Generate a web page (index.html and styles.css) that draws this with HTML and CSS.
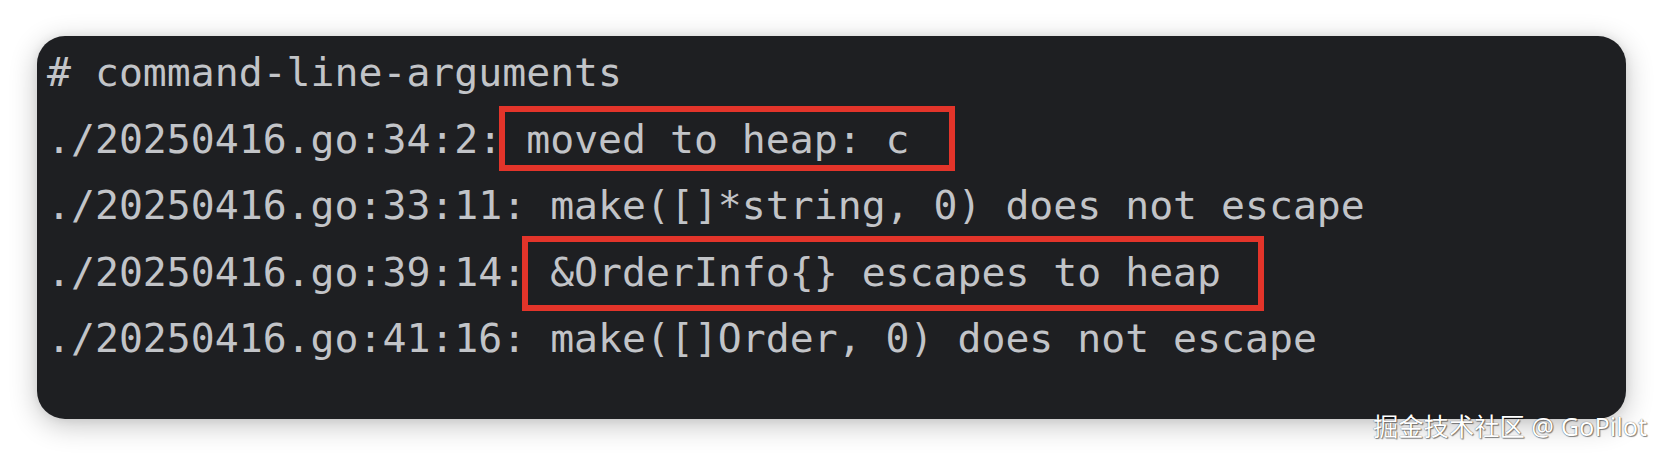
FILE: index.html
```html
<!DOCTYPE html>
<html lang="zh">
<head>
<meta charset="utf-8">
<title>command-line-arguments</title>
<link rel="stylesheet" href="styles.css">
</head>
<body>
<main class="page">
  <section class="terminal">
    <div class="line"># command-line-arguments</div>
    <div class="line">./20250416.go:34:2:<span class="mark mark-a"> moved to heap: c</span></div>
    <div class="line">./20250416.go:33:11: make([]*string, 0) does not escape</div>
    <div class="line">./20250416.go:39:14:<span class="mark mark-b"> &amp;OrderInfo{} escapes to heap</span></div>
    <div class="line">./20250416.go:41:16: make([]Order, 0) does not escape</div>
  </section>
  <div class="watermark">掘金技术社区 @ GoPilot</div>
</main>
</body>
</html>
```
FILE: styles.css
```css
html, body {
  margin: 0;
  padding: 0;
  background: #ffffff;
}

.page {
  position: relative;
  width: 1662px;
  height: 456px;
  padding: 36px 0 0 37px;
  box-sizing: border-box;
}

.terminal {
  width: 1589px;
  height: 383px;
  box-sizing: border-box;
  padding: 3px 0 0 10px;
  background: #1e1f22;
  border-radius: 28px;
  box-shadow: 0 6px 28px rgba(0, 0, 0, 0.24), 0 0 10px rgba(0, 0, 0, 0.07);
  font-family: "DejaVu Sans Mono", "Liberation Mono", monospace;
  font-size: 39.8px;
  line-height: 66.5px;
  color: #c2c4c8;
}

.line {
  white-space: pre;
  height: 66.5px;
}

.mark {
  position: relative;
  display: inline-block;
}

.mark::after {
  content: "";
  position: absolute;
  border: 6px solid #e3342a;
}

.mark-a::after {
  top: 0;
  bottom: 1px;
  left: -3px;
  right: -45px;
}

.mark-b::after {
  top: -3px;
  bottom: -6px;
  left: -4px;
  right: -43px;
}

.watermark {
  position: absolute;
  left: 1373px;
  top: 410px;
  font-family: "Noto Sans", "Noto Sans CJK SC", sans-serif;
  font-size: 25.3px;
  line-height: 32px;
  color: #ffffff;
  text-shadow: 0 0 1px rgba(0, 0, 0, 0.7), 1px 1px 1px rgba(0, 0, 0, 0.45);
  white-space: nowrap;
}
```
